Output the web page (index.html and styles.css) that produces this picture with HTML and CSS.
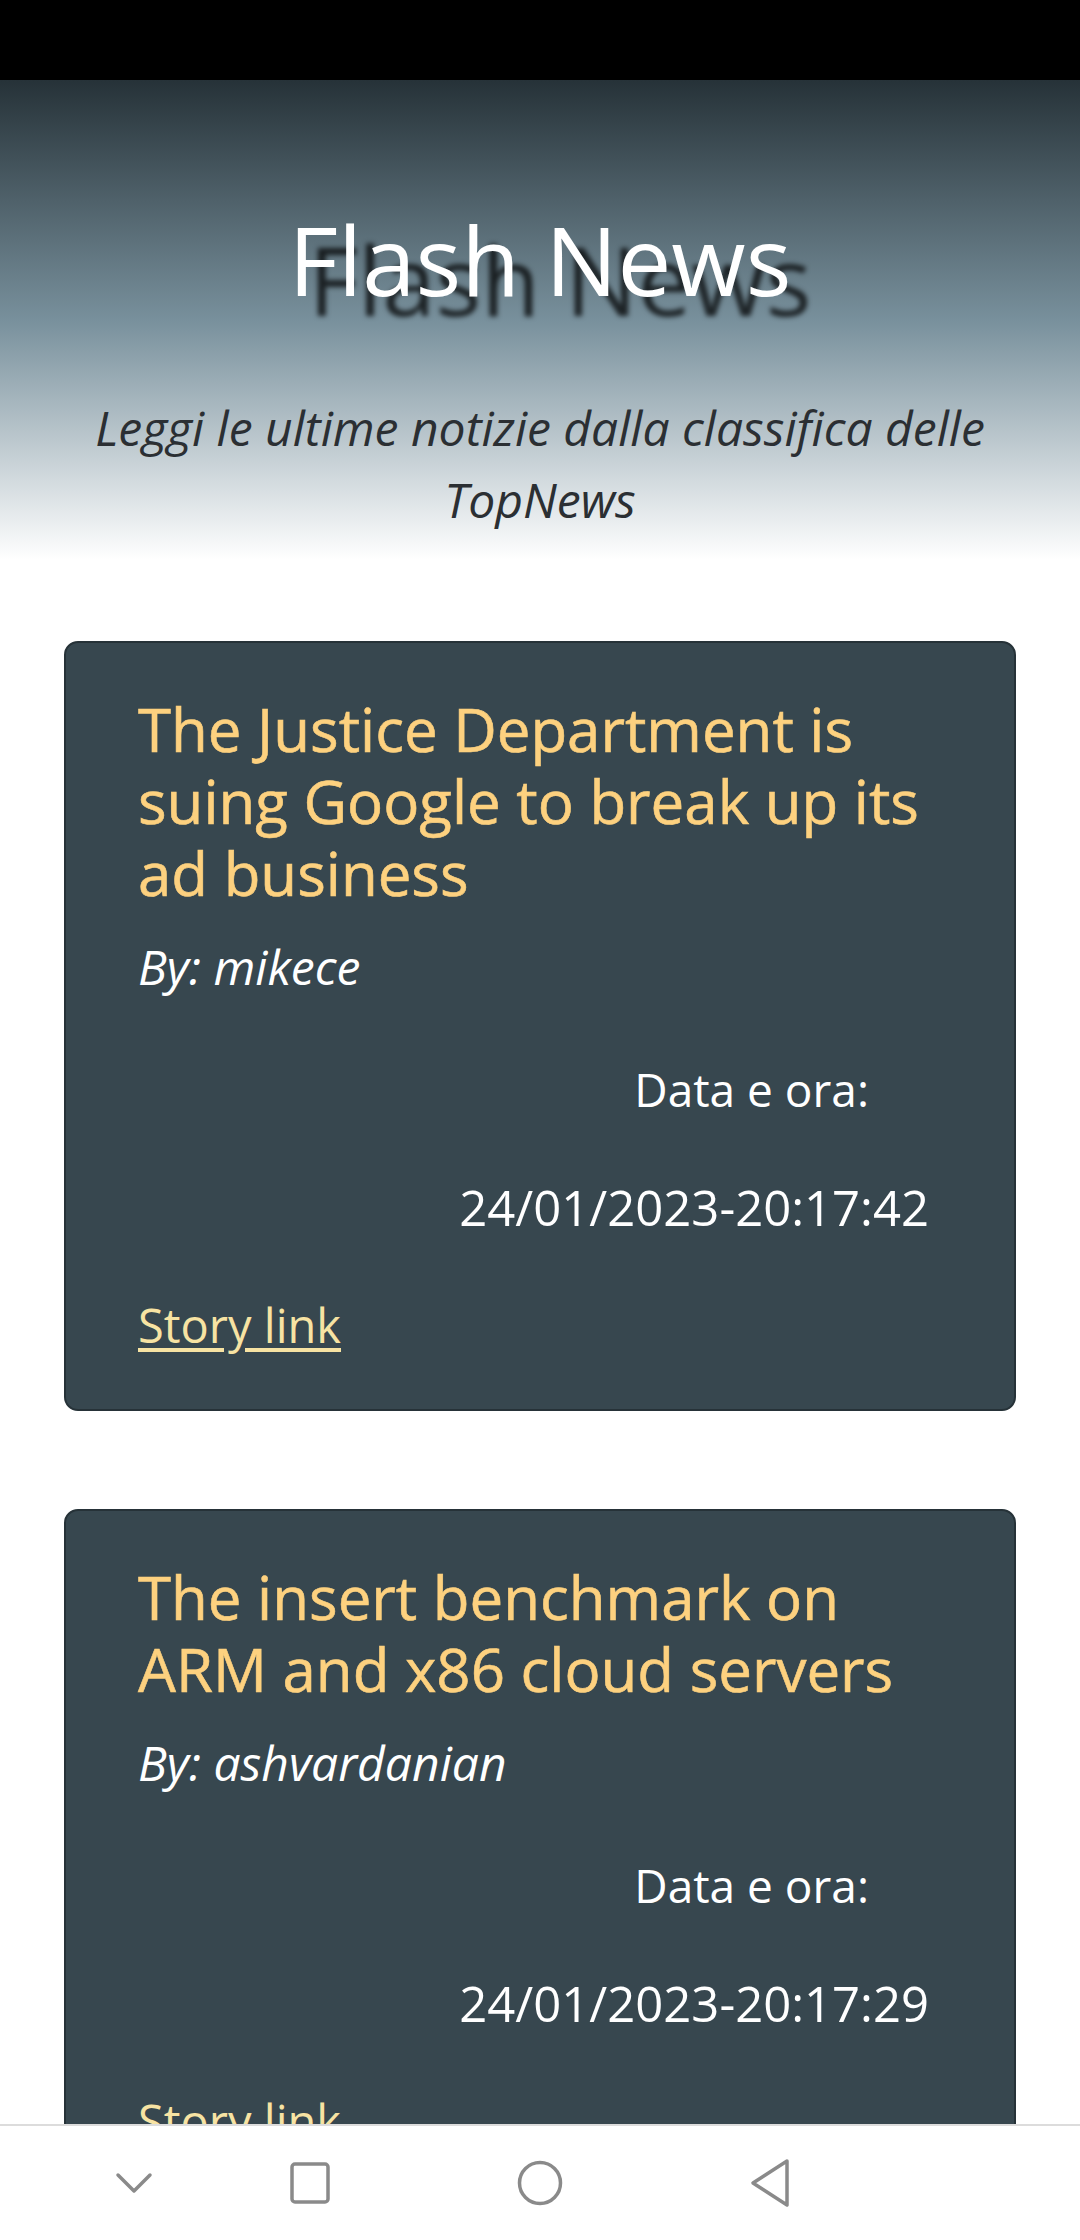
FILE: index.html
```html
<!DOCTYPE html>
<html lang="it">
<head>
<meta charset="utf-8">
<title>Flash News</title>
<link rel="stylesheet" href="styles.css">
</head>
<body>
<div class="statusbar"></div>
<header class="hero">
  <h1 class="hero-title">Flash News</h1>
  <p class="hero-sub">Leggi le ultime notizie dalla classifica delle TopNews</p>
</header>
<main class="list">
  <article class="card">
    <h2 class="card-title">The Justice Department is suing Google to break up its ad business</h2>
    <p class="card-by">By: mikece</p>
    <p class="card-label">Data e ora:</p>
    <p class="card-date">24/01/2023-20:17:42</p>
    <a class="card-link" href="#">Story link</a>
  </article>
  <article class="card">
    <h2 class="card-title">The insert benchmark on ARM and x86 cloud servers</h2>
    <p class="card-by">By: ashvardanian</p>
    <p class="card-label">Data e ora:</p>
    <p class="card-date">24/01/2023-20:17:29</p>
    <a class="card-link" href="#">Story link</a>
  </article>
</main>
<nav class="navbar">
  <svg class="nav-icon nav-chev" viewBox="0 0 40 24" width="40" height="24"><polyline points="4,4 20,20 36,4" fill="none" stroke="#8a8a8a" stroke-width="3.5" stroke-linecap="round" stroke-linejoin="round"/></svg>
  <svg class="nav-icon nav-sq" viewBox="0 0 40 42" width="40" height="42"><rect x="2" y="2" width="36" height="38" rx="3" fill="none" stroke="#8a8a8a" stroke-width="3.5"/></svg>
  <svg class="nav-icon nav-circ" viewBox="0 0 46 46" width="46" height="46"><circle cx="23" cy="23" r="20.5" fill="none" stroke="#8a8a8a" stroke-width="3.5"/></svg>
  <svg class="nav-icon nav-tri" viewBox="0 0 42 50" width="42" height="50"><path d="M38 3 L4 25 L38 47 Z" fill="none" stroke="#8a8a8a" stroke-width="3.5" stroke-linejoin="round"/></svg>
</nav>
</body>
</html>
```

FILE: styles.css
```css
html, body {
  margin: 0;
  padding: 0;
}
body {
  width: 1080px;
  height: 2240px;
  overflow: hidden;
  background: #ffffff;
  font-family: "Open Sans", "Noto Sans", "Liberation Sans", sans-serif;
}
.statusbar {
  height: 80px;
  background: #000;
}
.hero {
  background: linear-gradient(to bottom, #263238 0%, #78909c 50%, #ffffff 100%);
  padding: 121px 40px 24px;
  text-align: center;
}
.hero-title {
  margin: 0;
  font-size: 96px;
  line-height: 115px;
  font-weight: 400;
  color: #ffffff;
  text-shadow: 20px 20px 5px rgba(0, 0, 0, 0.75);
}
.hero-sub {
  margin: 76px 0 0;
  font-size: 48px;
  line-height: 72px;
  font-style: italic;
  color: #2b2f33;
}
.list {
  display: flex;
  flex-direction: column;
  gap: 98px;
  padding: 81px 64px 0;
}
.card {
  background: #37474f;
  border: 2px solid #263238;
  border-radius: 14px;
  padding: 50px 72px 54px;
  display: flex;
  flex-direction: column;
}
.card-title {
  margin: 0;
  font-size: 60px;
  line-height: 72px;
  font-weight: 400;
  color: #fdd17f;
  -webkit-text-stroke: 0.6px #fdd17f;
}
.card-by {
  margin: 28px 0 0;
  font-size: 48px;
  line-height: 60px;
  font-style: italic;
  color: #ffffff;
}
.card-label, .card-date {
  margin: 0;
  line-height: 60px;
  color: #ffffff;
  text-align: right;
}
.card-label {
  margin-top: 62px;
  padding-right: 73px;
  font-size: 46px;
}
.card-date {
  margin-top: 58px;
  padding-right: 13px;
  font-size: 49px;
}
.card-link {
  margin-top: 58px;
  align-self: flex-start;
  font-size: 47px;
  line-height: 60px;
  color: #f7e3a3;
  text-decoration: underline;
  text-underline-offset: 5px;
}
.navbar {
  position: fixed;
  left: 0;
  right: 0;
  bottom: 0;
  height: 114px;
  background: #ffffff;
  border-top: 2px solid #dcdcdc;
  display: flex;
  align-items: center;
  padding-left: 114px;
}
.nav-icon {
  display: block;
  flex: none;
}
.nav-sq { margin-left: 136px; }
.nav-circ { margin-left: 187px; }
.nav-tri { margin-left: 186px; }
```
